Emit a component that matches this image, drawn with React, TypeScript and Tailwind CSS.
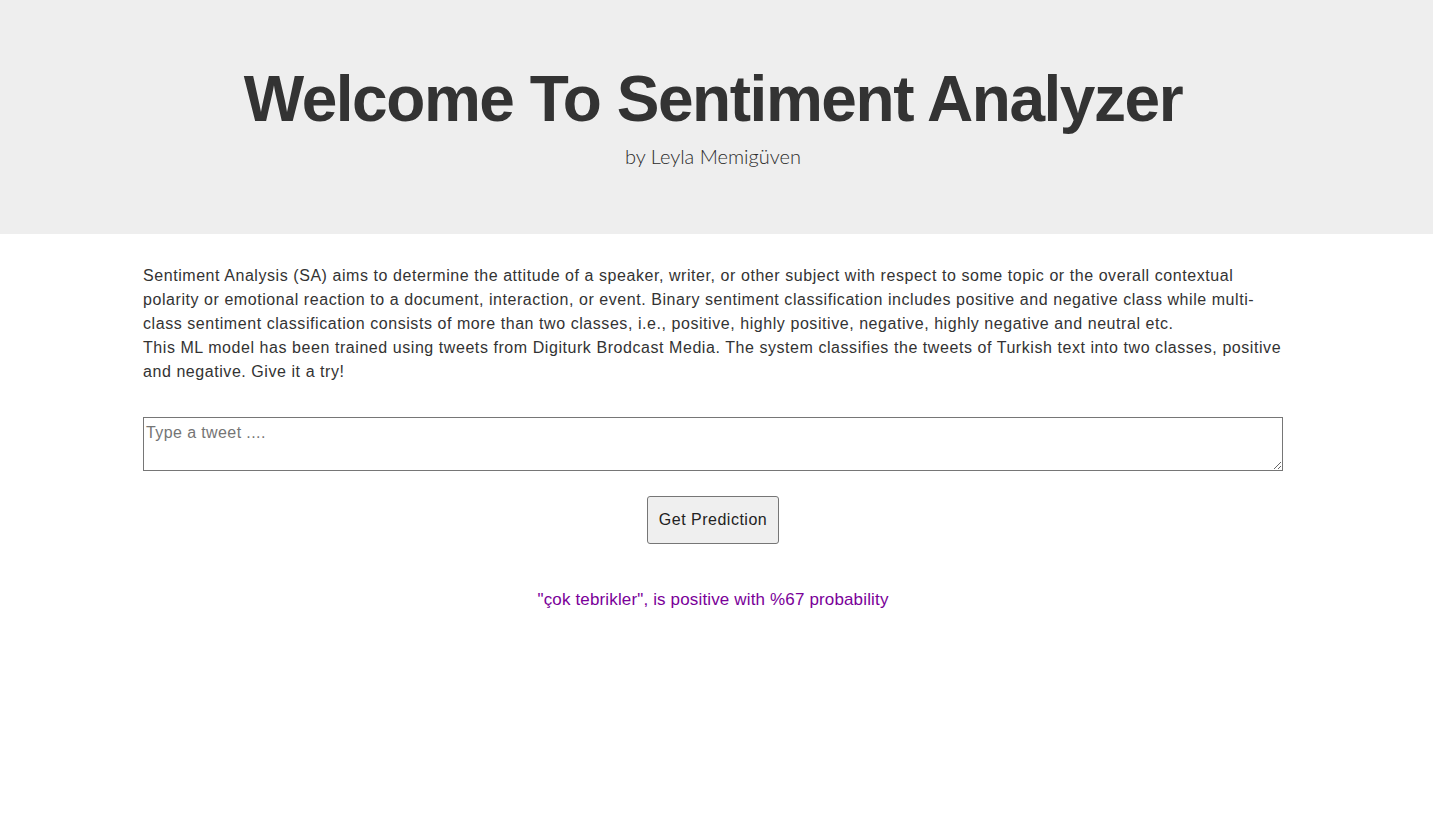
import React from "react";

export default function App() {
  return (
    <div className="min-h-[815px] bg-white text-[#333333]">
      <div className="bg-[#eeeeee] h-[234px] flex flex-col items-center pt-[61px] pr-[7px] font-['Liberation_Sans',Arial,sans-serif]">
        <h1 className="text-[64px] leading-[76px] font-bold text-[#333333] tracking-[-1.45px]">
          Welcome To Sentiment Analyzer
        </h1>
        <p className="text-[20px] leading-[28px] font-light text-[#2b2b2b] mt-[5px] font-['Lato',sans-serif] tracking-[0px]">
          by Leyla Memigüven
        </p>
      </div>
      <div className="w-[1140px] ml-[143px] pt-[30px] font-['Liberation_Sans',Arial,sans-serif]">
        <p className="text-[16px] leading-[24px] text-[#333333] tracking-[0.56px]">
          Sentiment Analysis (SA) aims to determine the attitude of a speaker, writer, or other subject with respect to some topic or the overall contextual polarity or emotional reaction to a document, interaction, or event. Binary sentiment classification includes positive and negative class while multi-class sentiment classification consists of more than two classes, i.e., positive, highly positive, negative, highly negative and neutral etc.
          <br />
          This ML model has been trained using tweets from Digiturk Brodcast Media. The system classifies the tweets of Turkish text into two classes, positive and negative. Give it a try!
        </p>
        <textarea
          placeholder="Type a tweet ...."
          className="block mt-[33px] w-full h-[54px] border border-[#767676] px-[2px] pt-[5px] text-[16px] leading-[20px] tracking-[0.4px] text-[#333] placeholder:text-[#757575] outline-none font-['Liberation_Sans',Arial,sans-serif]"
        />
        <div className="flex justify-center mt-[25px]">
          <button className="w-[132px] h-[48px] bg-[#efefef] border border-[#767676] rounded-[3px] text-[16px] tracking-[0.5px] text-[#222]">
            Get Prediction
          </button>
        </div>
        <p className="text-center text-[17px] leading-[24px] tracking-[0.15px] text-[#7a0099] mt-[44px]">
          "çok tebrikler", is positive with %67 probability
        </p>
      </div>
    </div>
  );
}
